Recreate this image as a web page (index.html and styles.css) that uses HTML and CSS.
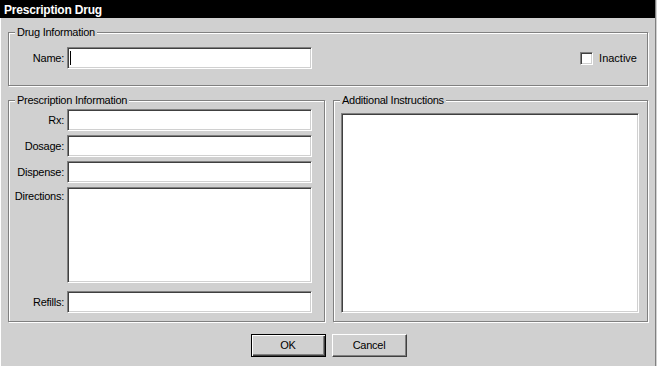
FILE: index.html
```html
<!DOCTYPE html>
<html>
<head>
<meta charset="utf-8">
<title>Prescription Drug</title>
<link rel="stylesheet" href="styles.css">
</head>
<body>
<div class="window">
  <div class="titlebar">Prescription Drug</div>
  <div class="client">
    <div class="group group-drug">
      <span class="legend">Drug Information</span>
      <div class="row">
        <span class="label">Name:</span>
        <div class="field"><span class="caret"></span></div>
        <div class="check"><span class="checkbox"></span><span class="check-text">Inactive</span></div>
      </div>
    </div>
    <div class="columns">
      <div class="group group-rx">
        <span class="legend">Prescription Information</span>
        <div class="row"><span class="label">Rx:</span><div class="field"></div></div>
        <div class="row"><span class="label">Dosage:</span><div class="field"></div></div>
        <div class="row"><span class="label">Dispense:</span><div class="field"></div></div>
        <div class="row row-tall"><span class="label label-top">Directions:</span><div class="field field-tall"></div></div>
        <div class="row row-last"><span class="label">Refills:</span><div class="field"></div></div>
      </div>
      <div class="group group-add">
        <span class="legend">Additional Instructions</span>
        <div class="field field-area"></div>
      </div>
    </div>
    <div class="buttons">
      <div class="button button-default">OK</div>
      <div class="button">Cancel</div>
    </div>
  </div>
</div>
</body>
</html>
```
FILE: styles.css
```css
* {
  box-sizing: border-box;
}

html, body {
  margin: 0;
  padding: 0;
}

body {
  width: 657px;
  height: 366px;
  background: #d0d0d0;
  font-family: "Liberation Sans", Arial, sans-serif;
  font-size: 11px;
  line-height: 13px;
  letter-spacing: -0.25px;
  color: #000;
  overflow: hidden;
}

.window {
  width: 656px;
  height: 366px;
  border-right: 1px solid #808080;
  display: flex;
  flex-direction: column;
}

.titlebar {
  height: 18px;
  background: #000;
  color: #fff;
  font-weight: bold;
  font-size: 12px;
  line-height: 16px;
  letter-spacing: -0.2px;
  padding: 2px 0 0 4px;
}

.client {
  flex: 1;
  border-left: 1px solid #fff;
  padding: 14px 7px 0 7px;
  display: flex;
  flex-direction: column;
}

.group {
  position: relative;
  border: 1px solid #808080;
  box-shadow: inset 1px 1px #fff, 1px 1px #fff;
}

.legend {
  position: absolute;
  top: -7px;
  left: 6px;
  padding: 0 2px 0 2px;
  background: #d0d0d0;
  white-space: nowrap;
}

.group-drug {
  width: 640px;
  height: 54px;
  padding: 14px 10px 0 0;
}

.row {
  display: flex;
  align-items: center;
}

.label {
  width: 55px;
  margin-right: 3px;
  text-align: right;
  white-space: nowrap;
}

.field {
  position: relative;
  width: 245px;
  height: 22px;
  background: #fff;
  border: 1px solid;
  border-color: #808080 #fff #fff #808080;
  box-shadow: inset 1px 1px #404040, inset -1px -1px #d0d0d0;
}

.caret {
  position: absolute;
  left: 2px;
  top: 3px;
  width: 1px;
  height: 14px;
  background: #000;
}

.check {
  margin-left: auto;
  display: flex;
  align-items: center;
  gap: 6px;
}

.check-text {
  letter-spacing: 0;
}

.checkbox {
  width: 13px;
  height: 13px;
  background: #fff;
  border: 1px solid;
  border-color: #808080 #fff #fff #808080;
  box-shadow: inset 1px 1px #404040, inset -1px -1px #d0d0d0;
}

.columns {
  display: flex;
  gap: 8px;
  margin-top: 14px;
}

.group-rx {
  width: 317px;
  height: 222px;
  padding: 8px 0 8px 0;
  display: flex;
  flex-direction: column;
  gap: 4px;
}

.row-tall {
  align-items: flex-start;
}

.label-top {
  padding-top: 3px;
}

.field-tall {
  height: 96px;
}

.row-last {
  margin-top: 4px;
}

.group-add {
  width: 315px;
  height: 222px;
  padding: 12px 8px 8px 7px;
  display: flex;
  flex-direction: column;
}

.field-area {
  width: auto;
  height: auto;
  flex: 1;
}

.buttons {
  display: flex;
  justify-content: center;
  gap: 6px;
  margin-top: 12px;
  padding-left: 1px;
}

.button {
  width: 75px;
  height: 23px;
  display: flex;
  align-items: center;
  justify-content: center;
  border: 1px solid;
  border-color: #fff #404040 #404040 #fff;
  box-shadow: inset -1px -1px #808080;
}

.button-default {
  border-color: #000;
  box-shadow: inset 1px 1px #fff, inset -1px -1px #404040, inset -2px -2px #808080;
}
```
